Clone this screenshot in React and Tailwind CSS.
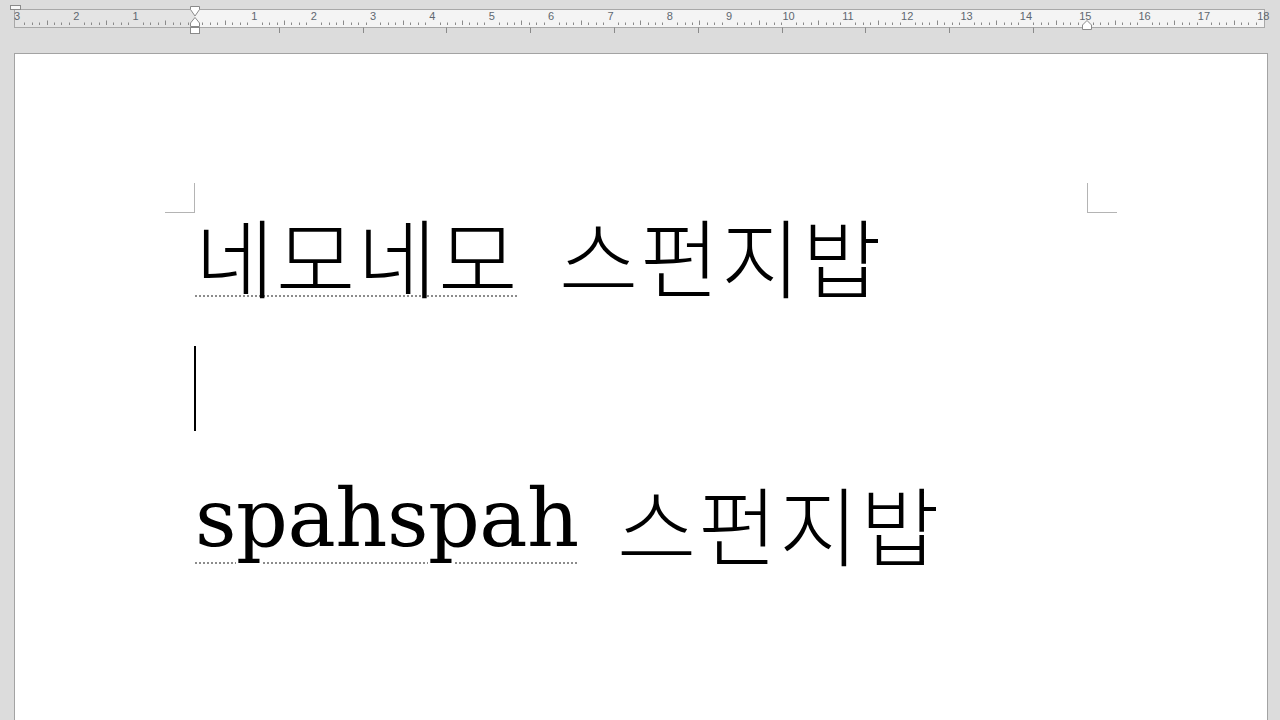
export default function App() {
  const cm = 59.35;
  const origin = 195;
  const ticks = [];
  for (let i = -24; i <= 144; i++) {
    const x = origin + (i / 8) * cm;
    if (i % 8 === 0) continue;
    const mid = i % 4 === 0;
    ticks.push(
      <line
        key={"t" + i}
        x1={Math.round(x) + 0.5}
        x2={Math.round(x) + 0.5}
        y1={mid ? 20.5 : 22.5}
        y2={25}
        stroke="#8a8a8a"
        strokeWidth="1"
      />
    );
  }
  const nums = [];
  for (let n = -3; n <= 18; n++) {
    if (n === 0) continue;
    const x = origin + n * cm;
    nums.push(
      <text
        key={"n" + n}
        x={x}
        y={20}
        textAnchor="middle"
        fontSize="11"
        fill="#5f6770"
        fontFamily="'Liberation Sans', Arial, sans-serif"
      >
        {Math.abs(n)}
      </text>
    );
  }
  const tabs = [];
  for (let k = 1; k <= 10; k++) {
    const x = Math.round(origin + k * 83.8) + 0.5;
    tabs.push(<line key={"tab" + k} x1={x} x2={x} y1={27.5} y2={33} stroke="#8a8a8a" strokeWidth="1" />);
  }

  const ko = "font-['Noto_Sans_CJK_KR',sans-serif] font-light";

  return (
    <div className="w-[1280px] h-[720px] overflow-hidden bg-[#dcdcdc]">
      <div className="h-[53px]">
        <svg width="1280" height="53" viewBox="0 0 1280 53">
          <rect x="14.5" y="9.5" width="1250" height="18" fill="#f4f4f4" stroke="#a8a8a8" />
          <rect x="15" y="10" width="180" height="17" fill="#e4e4e4" />
          {ticks}
          {nums}
          {tabs}
          <rect x="10.5" y="5.5" width="10" height="4" fill="#f8f8f8" stroke="#8a8a8a" />
          <polygon points="190.5,6.5 199.5,6.5 199.5,9.5 195,16 190.5,9.5" fill="#ffffff" stroke="#8a8a8a" />
          <polygon points="195,17.5 199.5,23 199.5,26.5 190.5,26.5 190.5,23" fill="#ffffff" stroke="#8a8a8a" />
          <rect x="190.5" y="27.5" width="9" height="6" fill="#ffffff" stroke="#8a8a8a" />
          <polygon points="1087,20.5 1091.5,25 1091.5,29.5 1082.5,29.5 1082.5,25" fill="#ffffff" stroke="#8a8a8a" />
        </svg>
      </div>
      <div className="relative ml-[14px] w-[1254px] h-[680px] bg-white border border-[#a3a3a3]">
        <div className="absolute left-[150px] top-[129px] w-[30px] h-[30px] border-r border-b border-[#b4b4b4]" />
        <div className="absolute left-[1072px] top-[129px] w-[30px] h-[30px] border-l border-b border-[#b4b4b4]" />
        <div className={"pl-[180px] pt-[120px] text-black text-[86px] " + ko}>
          <div className="h-[134px] leading-[134px] whitespace-nowrap">
            <span className="inline-block w-[364px] align-[-14px] tracking-[2px] underline decoration-dotted decoration-[#8c8c8c] decoration-2 underline-offset-[3px]">
              네모네모
            </span>
            <span className="align-[-14px] tracking-[2px]">스펀지밥</span>
          </div>
          <div className="h-[134px] pt-[38px]">
            <div className="w-[2px] h-[85px] bg-black -ml-[1px]" />
          </div>
          <div className="h-[134px] leading-[134px] whitespace-nowrap">
            <span className="inline-block w-[422px] text-[81px] font-['DejaVu_Serif',serif] font-normal tracking-[-0.5px] underline decoration-dotted decoration-[#8c8c8c] decoration-2 underline-offset-[16px]">
              spahspah
            </span>
            <span className="align-[-14px] tracking-[2px]">스펀지밥</span>
          </div>
        </div>
      </div>
    </div>
  );
}
